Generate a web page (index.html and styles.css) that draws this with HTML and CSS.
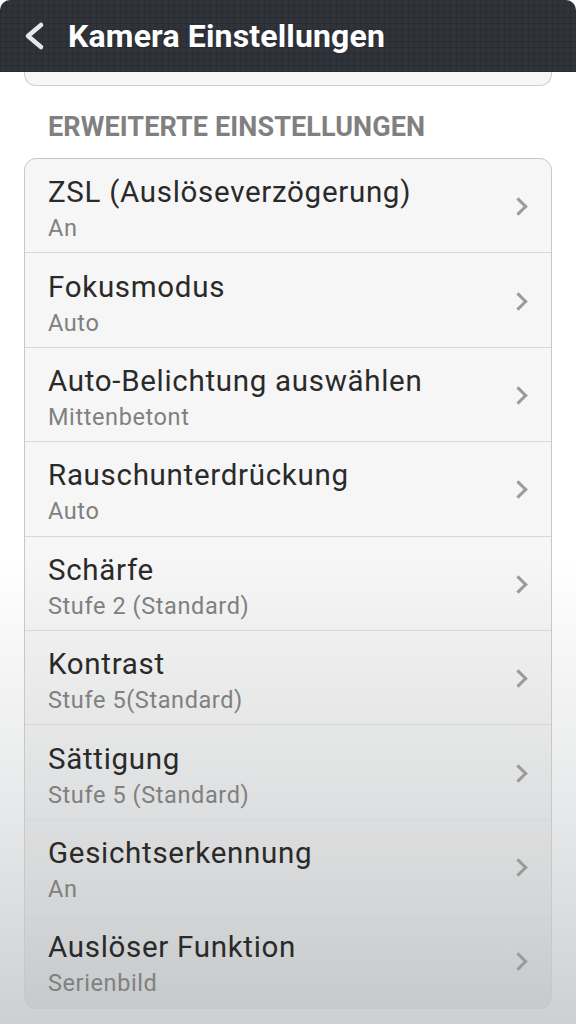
FILE: index.html
```html
<!DOCTYPE html>
<html lang="de">
<head>
    <meta charset="UTF-8">
    <meta name="viewport" content="width=device-width, initial-scale=1.0">
    <title>Kamera Einstellungen</title>
    <link rel="stylesheet" href="styles.css">
</head>
<body>
    <header class="topbar">
        <svg class="back" width="24" height="30" viewBox="0 0 24 30">
            <path d="M19 4 L6 15 L19 26" fill="none" stroke="#e8e8e8" stroke-width="4.5" stroke-linecap="round" stroke-linejoin="round"/>
        </svg>
        <h1>Kamera Einstellungen</h1>
    </header>

    <div class="card-end"></div>

    <h2 class="section-title">ERWEITERTE EINSTELLUNGEN</h2>

    <ul class="card">
        <li class="row"><div class="text"><div class="title">ZSL (Auslöseverzögerung)</div><div class="sub">An</div></div><span class="chev"></span></li>
        <li class="row"><div class="text"><div class="title">Fokusmodus</div><div class="sub">Auto</div></div><span class="chev"></span></li>
        <li class="row"><div class="text"><div class="title">Auto-Belichtung auswählen</div><div class="sub">Mittenbetont</div></div><span class="chev"></span></li>
        <li class="row"><div class="text"><div class="title">Rauschunterdrückung</div><div class="sub">Auto</div></div><span class="chev"></span></li>
        <li class="row"><div class="text"><div class="title">Schärfe</div><div class="sub">Stufe 2 (Standard)</div></div><span class="chev"></span></li>
        <li class="row"><div class="text"><div class="title">Kontrast</div><div class="sub">Stufe 5(Standard)</div></div><span class="chev"></span></li>
        <li class="row"><div class="text"><div class="title">Sättigung</div><div class="sub">Stufe 5 (Standard)</div></div><span class="chev"></span></li>
        <li class="row"><div class="text"><div class="title">Gesichtserkennung</div><div class="sub">An</div></div><span class="chev"></span></li>
        <li class="row"><div class="text"><div class="title">Auslöser Funktion</div><div class="sub">Serienbild</div></div><span class="chev"></span></li>
    </ul>
</body>
</html>
```

FILE: styles.css
```css
body {
    font-family: Roboto, "Noto Sans", sans-serif;
    margin: 0;
    min-height: 1024px;
    background: linear-gradient(180deg, #ffffff 0px, #ffffff 560px, #e6e7e8 820px, #cdd0d1 1024px);
    color: #2a2a2a;
}
.topbar {
    height: 72px;
    box-sizing: border-box;
    display: flex;
    align-items: center;
    padding-left: 22px;
    background-color: #30333a;
    background-image:
        repeating-linear-gradient(90deg, rgba(0, 0, 0, 0.12) 0 1px, transparent 1px 6px),
        repeating-linear-gradient(0deg, rgba(0, 0, 0, 0.12) 0 1px, transparent 1px 6px);
    border-radius: 10px 10px 0 0;
}
.back {
    display: block;
    margin-right: 22px;
}
.topbar h1 {
    margin: 0;
    color: #ffffff;
    font-size: 32px;
    font-weight: bold;
    letter-spacing: 0.15px;
}
.card-end {
    margin: 0 24px;
    height: 13px;
    background: #f6f6f6;
    border: 1px solid #cfcfcf;
    border-top: none;
    border-radius: 0 0 12px 12px;
}
.section-title {
    margin: 25px 0 0 48px;
    height: 32px;
    line-height: 32px;
    font-size: 27px;
    font-weight: bold;
    color: #808080;
    letter-spacing: 0.1px;
}
.card {
    list-style: none;
    margin: 15px 24px 0;
    padding: 0;
    border: 1px solid #c8c8c8;
    border-radius: 12px;
    background: rgba(0, 0, 0, 0.035);
    overflow: hidden;
}
.row {
    box-sizing: border-box;
    height: 94.4px;
    display: flex;
    align-items: center;
    padding: 0 26px 0 23px;
    border-top: 1px solid #d8d8d8;
}
.row:first-child {
    border-top: none;
    height: 93.4px;
}
.text {
    flex: 1;
    margin-top: 6px;
}
.title {
    font-size: 29.5px;
    line-height: 34px;
    letter-spacing: 0.7px;
    color: #2a2a2a;
}
.sub {
    font-size: 23.5px;
    line-height: 28px;
    letter-spacing: 0.6px;
    margin-top: 5px;
    color: #808080;
}
.chev {
    width: 10px;
    height: 10px;
    border-top: 3.5px solid #9a9a9a;
    border-right: 3.5px solid #9a9a9a;
    transform: rotate(45deg);
    margin-top: 2px;
}
```
